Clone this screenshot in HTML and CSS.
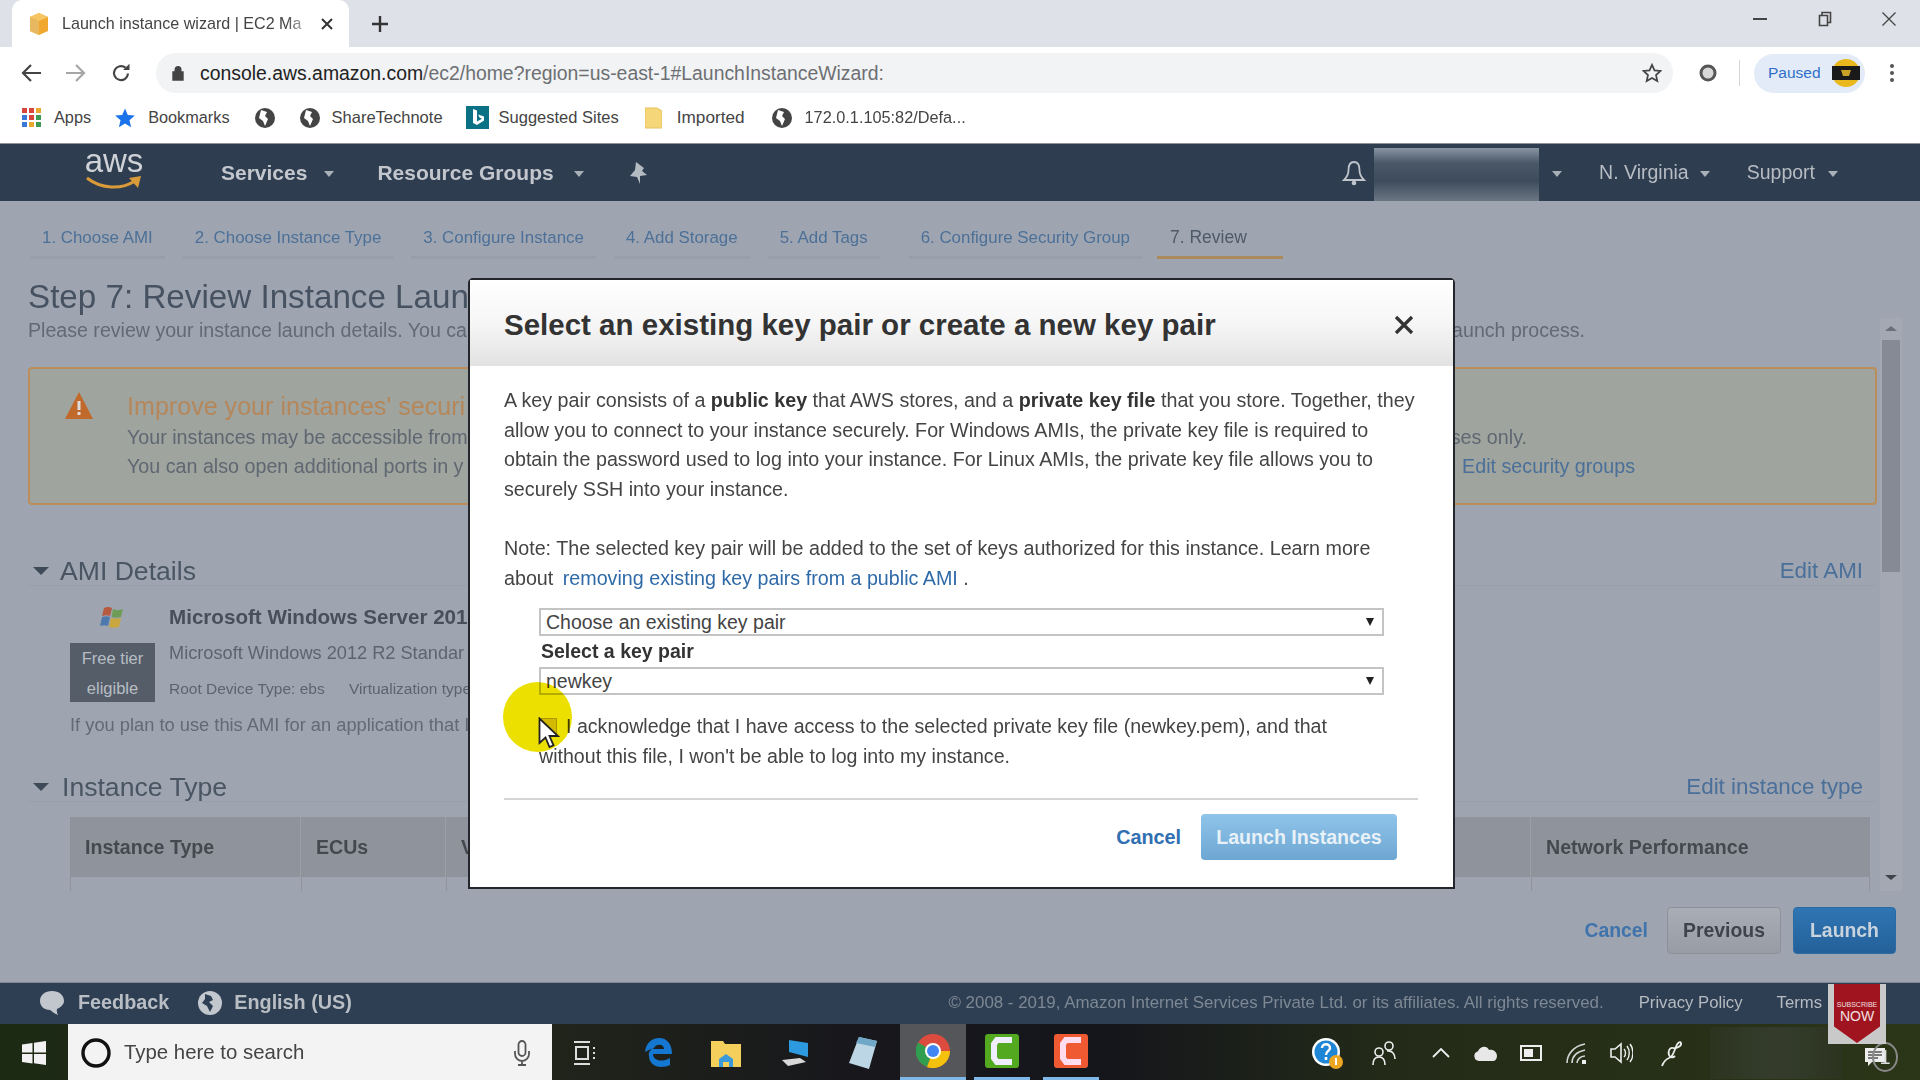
FILE: index.html
```html
<!DOCTYPE html>
<html lang="en">
<head>
<meta charset="utf-8">
<title>Launch instance wizard | EC2 Management Console</title>
<link rel="stylesheet" href="styles.css">
</head>
<body>
<div class="page">
  <div class="tabstrip">
    <div class="tab">
      <svg class="favicon" width="22" height="24" viewBox="0 0 22 24"><path d="M11 1 20 5V19L11 23 2 19V5Z" fill="#f0a92e"/><path d="M11 9V23L2 19V5Z" fill="#e8b860"/><path d="M11 1 20 5 11 9 2 5Z" fill="#f6c665"/></svg>
      <span class="tab-title">Launch instance wizard | EC2 Ma</span>
      <svg class="tab-x" width="12" height="12" viewBox="0 0 12 12"><path d="M1 1 11 11M11 1 1 11" stroke="#333" stroke-width="2"/></svg>
    </div>
    <svg class="tab-plus" width="16" height="16" viewBox="0 0 16 16"><path d="M8 0V16M0 8H16" stroke="#333" stroke-width="2.4"/></svg>
    <div class="winctrls">
      <svg width="14" height="14" viewBox="0 0 14 14"><path d="M0 7H14" stroke="#444" stroke-width="2"/></svg>
      <svg width="14" height="16" viewBox="0 0 14 16"><path d="M1.500 4.500H9.500V14.500H1.500ZM4 4V1.500H12.500V11.500H10" fill="none" stroke="#444" stroke-width="1.600"/></svg>
      <svg width="14" height="14" viewBox="0 0 14 14"><path d="M0.500 0.500 13.500 13.500M13.500 0.500 0.500 13.500" stroke="#444" stroke-width="1.300"/></svg>
    </div>
  </div>

  <div class="toolbar">
    <svg class="tb-back" width="22" height="20" viewBox="0 0 22 20"><path d="M21 10H3M11 2 3 10l8 8" fill="none" stroke="#444" stroke-width="2.200"/></svg>
    <svg class="tb-fwd" width="22" height="20" viewBox="0 0 22 20"><path d="M1 10H19M11 2l8 8-8 8" fill="none" stroke="#a6a6a6" stroke-width="2.200"/></svg>
    <svg class="tb-reload" width="20" height="20" viewBox="0 0 20 20"><path d="M17 10.500A7 7 0 1 1 14.500 4.700" fill="none" stroke="#444" stroke-width="2.200"/><path d="M12 7H18.500V0.800Z" fill="#444"/></svg>
    <div class="omnibox">
      <svg class="lock" width="12" height="16" viewBox="0 0 12 16"><path d="M1 7H11V15H1ZM3.200 7V4.500a2.800 2.800 0 0 1 5.600 0V7" fill="#444" stroke="#444" stroke-width="1.400"/></svg>
      <span class="url"><span class="url-host">console.aws.amazon.com</span>/ec2/home?region=us-east-1#LaunchInstanceWizard:</span>
      <svg class="url-star" width="20" height="20" viewBox="0 0 20 20"><path d="M10 1.800 12.500 7.400 18.500 8 14 12 15.300 18 10 14.900 4.700 18 6 12 1.500 8 7.500 7.400Z" fill="none" stroke="#444" stroke-width="1.700"/></svg>
    </div>
    <svg class="ext" width="20" height="20" viewBox="0 0 20 20"><circle cx="10" cy="10" r="7" fill="#d8d8d8" stroke="#555" stroke-width="3"/></svg>
    <span class="tb-sep"></span>
    <div class="paused">
      <span>Paused</span>
      <svg width="28" height="28" viewBox="0 0 28 28"><circle cx="14" cy="14" r="14" fill="#e8b81c"/><rect y="7" width="28" height="14" fill="#1a1a1a"/><path d="M9 11H19L17 17H11Z" fill="#c9a227"/></svg>
    </div>
    <svg class="dots" width="6" height="20" viewBox="0 0 6 20"><circle cx="3" cy="3" r="2" fill="#555"/><circle cx="3" cy="10" r="2" fill="#555"/><circle cx="3" cy="17" r="2" fill="#555"/></svg>
  </div>

  <div class="bookmarks">
    <svg class="bm-apps" width="20" height="20" viewBox="0 0 20 20">
      <rect x="0" y="0" width="5" height="5" fill="#d8453a"/><rect x="7" y="0" width="5" height="5" fill="#d8453a"/><rect x="14" y="0" width="5" height="5" fill="#e9a82e"/>
      <rect x="0" y="7" width="5" height="5" fill="#3c78d8"/><rect x="7" y="7" width="5" height="5" fill="#d8453a"/><rect x="14" y="7" width="5" height="5" fill="#3c9a55"/>
      <rect x="0" y="14" width="5" height="5" fill="#3c78d8"/><rect x="7" y="14" width="5" height="5" fill="#e9a82e"/><rect x="14" y="14" width="5" height="5" fill="#3c9a55"/>
    </svg>
    <span class="bm-text bm-t-apps">Apps</span>
    <svg class="bm-star" width="20" height="20" viewBox="0 0 20 20"><path d="M10 0.500 12.800 7 19.800 7.600 14.500 12.300 16.100 19.300 10 15.600 3.900 19.300 5.500 12.300 0.200 7.600 7.200 7Z" fill="#1a73e8"/></svg>
    <span class="bm-text bm-t-bookmarks">Bookmarks</span>
    <svg class="bm-globe g1" width="20" height="20" viewBox="0 0 20 20"><circle cx="10" cy="10" r="10" fill="#444"/><path d="M6 2 12 4 10 8 13 11 10 18 8 13 4 10Z" fill="#fff"/></svg>
    <svg class="bm-globe g2" width="20" height="20" viewBox="0 0 20 20"><circle cx="10" cy="10" r="10" fill="#444"/><path d="M6 2 12 4 10 8 13 11 10 18 8 13 4 10Z" fill="#fff"/></svg>
    <span class="bm-text bm-t-share">ShareTechnote</span>
    <svg class="bm-bing" width="23" height="23" viewBox="0 0 23 23"><rect width="23" height="23" fill="#0b7285"/><path d="M7 3 11 4.500V15.500L16 12.800 13.500 11.500 12.200 8.500 18 10.500V14.500L11 19 7 17Z" fill="#fff"/></svg>
    <span class="bm-text bm-t-sites">Suggested Sites</span>
    <svg class="bm-folder" width="17" height="22" viewBox="0 0 17 22"><path d="M0 1H12L17 4V21H0Z" fill="#f5d77a" stroke="#e6c25e"/></svg>
    <span class="bm-text bm-t-imp">Imported</span>
    <svg class="bm-globe g3" width="20" height="20" viewBox="0 0 20 20"><circle cx="10" cy="10" r="10" fill="#444"/><path d="M6 2 12 4 10 8 13 11 10 18 8 13 4 10Z" fill="#fff"/></svg>
    <span class="bm-text bm-t-ip">172.0.1.105:82/Defa...</span>
  </div>

  <header class="awsnav">
    <div class="awslogo">
      <span class="aws-word">aws</span>
      <svg width="58" height="18" viewBox="0 0 58 18"><path d="M2 4C16 15 36 16 50 7" fill="none" stroke="#d99a3a" stroke-width="3"/><path d="M44 4 56 2 53 14Z" fill="#d99a3a"/></svg>
    </div>
    <span class="nav-item nav-services">Services</span><i class="caret nc1"></i>
    <span class="nav-item nav-groups">Resource Groups</span><i class="caret nc2"></i>
    <svg class="pin" width="18" height="22" viewBox="0 0 18 22"><path d="M7 0 15 6 13 9 18 13 11 14 11 22 8 15 1 14 6 8Z" fill="#b4bac2"/></svg>
    <div class="nav-right">
      <svg class="bell" width="24" height="26" viewBox="0 0 24 26"><path d="M12 2C7.500 2 6.500 6 6.500 10 6.500 15 5 17 2 20H22C19 17 17.500 15 17.500 10 17.500 6 16.500 2 12 2Z" fill="none" stroke="#c0c5cb" stroke-width="1.800"/><circle cx="12" cy="23" r="2.300" fill="#c0c5cb"/></svg>
      <div class="redacted"></div>
      <i class="caret nc3"></i>
      <span class="nav-r nav-region">N. Virginia</span><i class="caret nc4"></i>
      <span class="nav-r nav-support">Support</span><i class="caret nc5"></i>
    </div>
  </header>

  <main class="console">
    <nav class="steps">
      <a class="step s1">1. Choose AMI</a>
      <a class="step s2">2. Choose Instance Type</a>
      <a class="step s3">3. Configure Instance</a>
      <a class="step s4">4. Add Storage</a>
      <a class="step s5">5. Add Tags</a>
      <a class="step s6">6. Configure Security Group</a>
      <a class="step s7 active">7. Review</a>
    </nav>
    <h1 class="title">Step 7: Review Instance Laun</h1>
    <div class="scrollrow">
      <div class="scroller">
        <div class="intro"><span class="clip-intro">Please review your instance launch details. You ca</span><span class="intro-end">aunch process.</span></div>
        <div class="warning">
          <svg class="warn-icon" width="28" height="27" viewBox="0 0 28 27"><path d="M14 0 28 27H0Z" fill="#c0692a"/><rect x="12.500" y="9" width="3" height="9" fill="#ddd"/><rect x="12.500" y="20" width="3" height="3" fill="#ddd"/></svg>
          <div class="warn-body">
            <div class="warn-row warn-head"><span class="clip-warn">Improve your instances' securi</span></div>
            <div class="warn-row"><span class="clip-warn">Your instances may be accessible from</span><span class="warn-end1">ses only.</span></div>
            <div class="warn-row"><span class="clip-warn">You can also open additional ports in y</span><a class="link warn-end2">Edit security groups</a></div>
          </div>
        </div>
        <div class="sec-head ami-head"><i class="tri"></i><span class="sec-title">AMI Details</span><a class="link sec-edit">Edit AMI</a></div>
        <div class="ami-row">
          <div class="ami-left">
            <svg class="winlogo" width="27" height="24" viewBox="0 0 27 24"><path d="M5 2C8 .5 11 .8 13 2L11 10C9 9 6 9 3 10Z" fill="#b5593f"/><path d="M14 3C17 4.500 20 4.500 24 3L22 11C18 12 15 12 12.500 11Z" fill="#6f9c57"/><path d="M3 11C6 10 9 10 11 11L9 20C7 19 4 19 1 20Z" fill="#4d79ad"/><path d="M12 12C15 13 18 13 22 12L20 21C16 22 13 22 10 21Z" fill="#c9a63e"/></svg>
            <div class="freetier">Free tier<br>eligible</div>
          </div>
          <div class="ami-info">
            <div class="ami-name">Microsoft Windows Server 201</div>
            <div class="ami-desc">Microsoft Windows 2012 R2 Standar</div>
            <div class="ami-meta"><span class="meta-a">Root Device Type: ebs</span><span>Virtualization type</span></div>
          </div>
        </div>
        <div class="ami-note">If you plan to use this AMI for an application that I</div>
        <div class="sec-head type-head"><i class="tri"></i><span class="sec-title">Instance Type</span><a class="link sec-edit">Edit instance type</a></div>
        <div class="table">
          <div class="tcell c1">Instance Type</div>
          <div class="tcell c2">ECUs</div>
          <div class="tcell c3"><span class="c3-clip">V</span></div>
          <div class="tcell c4">Network Performance</div>
        </div>
        <div class="trow"><span class="tb1"></span><span class="tb2"></span><span class="tb3"></span></div>
      </div>
      <div class="scrollbar">
        <i class="sb-up"></i>
        <span class="sb-thumb"></span>
        <i class="sb-down"></i>
      </div>
    </div>
    <div class="actions">
      <a class="act-cancel">Cancel</a>
      <span class="btn btn-prev">Previous</span>
      <span class="btn btn-launch">Launch</span>
    </div>

    <section class="modal">
      <div class="modal-head">
        <h2>Select an existing key pair or create a new key pair</h2>
        <svg width="20" height="20" viewBox="0 0 20 20"><path d="M2 2 18 18M18 2 2 18" stroke="#333" stroke-width="3.200"/></svg>
      </div>
      <div class="modal-body">
        <p class="m-p">A key pair consists of a <b>public key</b> that AWS stores, and a <b>private key file</b> that you store. Together, they allow you to connect to your instance securely. For Windows AMIs, the private key file is required to obtain the password used to log into your instance. For Linux AMIs, the private key file allows you to securely SSH into your instance.</p>
        <p class="m-p m-note">Note: The selected key pair will be added to the set of keys authorized for this instance. Learn more about <a class="link m-link">removing existing key pairs from a public AMI</a> .</p>
        <div class="m-form">
          <div class="select">Choose an existing key pair<i></i></div>
          <label class="m-label">Select a key pair</label>
          <div class="select">newkey<i></i></div>
          <p class="ack"><span class="check"></span>I acknowledge that I have access to the selected private key file (newkey.pem), and that without this file, I won't be able to log into my instance.</p>
        </div>
      </div>
      <div class="modal-foot">
        <a class="mf-cancel">Cancel</a>
        <span class="mf-launch">Launch Instances</span>
      </div>
      <span class="highlight"></span>
      <svg class="cursor" width="22" height="32" viewBox="0 0 22 32"><path d="M1.500 1.500V26L7.500 20.500 11.500 30 15.500 28.300 11.500 19H20Z" fill="#fff" stroke="#222" stroke-width="1.800"/></svg>
    </section>
  </main>

  <footer class="foot">
    <svg class="f-bubble" width="26" height="26" viewBox="0 0 26 26"><path d="M13 1C6 1 1 5 1 11c0 5 4 9 10 9 3 2 5 4 8 5-1-2-1.500-4-1-6 4-2 7-4.500 7-8C25 5 20 1 13 1Z" fill="#c2c7ce"/></svg>
    <span class="f-b f-feedback">Feedback</span>
    <svg class="f-globe" width="24" height="24" viewBox="0 0 24 24"><circle cx="12" cy="12" r="12" fill="#c2c7ce"/><path d="M7 3 13 5 15 9 11 11 15 15 12 21 9 15 4 12 7 8Z" fill="#2f3f53"/></svg>
    <span class="f-b f-lang">English (US)</span>
    <span class="f-copy">© 2008 - 2019, Amazon Internet Services Private Ltd. or its affiliates. All rights reserved.</span>
    <span class="f-link f-privacy">Privacy Policy</span>
    <span class="f-link f-terms">Terms</span>
  </footer>

  <div class="taskbar">
    <svg class="t-win" width="24" height="24" viewBox="0 0 24 24"><path d="M0 3.500 10.500 2V11.500H0ZM12 1.800 24 0V11.500H12ZM0 13H10.500V22.500L0 21ZM12 13H24V24L12 22.300Z" fill="#f2f2f2"/></svg>
    <div class="t-search">
      <svg width="32" height="32" viewBox="0 0 32 32"><circle cx="16" cy="16" r="13" fill="none" stroke="#111" stroke-width="3.400"/></svg>
      <span class="t-type">Type here to search</span>
      <svg class="t-mic" width="18" height="26" viewBox="0 0 18 26"><rect x="5.500" y="1" width="7" height="15" rx="3.500" fill="none" stroke="#555" stroke-width="1.800"/><path d="M2 11V14a7 7 0 0 0 14 0V11M9 21V25M5 25H13" fill="none" stroke="#555" stroke-width="1.800"/></svg>
    </div>
    <svg class="t-view" width="24" height="24" viewBox="0 0 24 24"><path d="M1 1H17M1 23H17M3 6H15V18H3ZM21 6V8M21 11V13M21 16V18" fill="none" stroke="#ddd" stroke-width="2"/></svg>
    <svg class="t-edge" width="28" height="30" viewBox="0 0 28 30"><path d="M1 14C2 5 8 0 15 0c8 0 13 6 13 16H9c0 6 8 9 17 4v7c-11 5-21 0-21-9-1-3 1-6 4-8 1-1 2-1 3-1-4 1-7 3-11 5ZM9 11H20C20 6 12 5 9 11Z" fill="#1478d2"/></svg>
    <svg class="t-folder" width="30" height="28" viewBox="0 0 30 28"><path d="M0 2H12L14 5H30V28H0Z" fill="#f5cf5b"/><path d="M8 28V20L15 15 22 20V28H18V23H12V28Z" fill="#3b9ad9"/></svg>
    <svg class="t-pc" width="32" height="30" viewBox="0 0 32 30"><path d="M9 2 28 5V19L9 14Z" fill="#2d9ae0"/><path d="M2 22 20 20 26 24 8 28Z" fill="#d8d8d8"/></svg>
    <svg class="t-note" width="30" height="32" viewBox="0 0 30 32"><path d="M10 0 28 4 20 32 0 26Z" fill="#bcd6e6"/><path d="M10 0 28 4 26 10 7 6Z" fill="#6fa8c7"/></svg>
    <div class="t-chrome">
      <svg width="34" height="34" viewBox="0 0 34 34"><circle cx="17" cy="17" r="17" fill="#dd4b3e"/><path d="M17 17 2 8.500A17 17 0 0 0 11 33Z" fill="#2f9e4f"/><path d="M17 17H34A17 17 0 0 1 11 33Z" fill="#f4c20d"/><circle cx="17" cy="17" r="8" fill="#fff"/><circle cx="17" cy="17" r="6" fill="#4285f4"/></svg>
    </div>
    <div class="t-cam green"><svg width="34" height="34" viewBox="0 0 34 34"><rect width="34" height="34" rx="3" fill="#53a91f"/><path d="M27 6H12L9 10V24L12 28H27" fill="none" stroke="#eef" stroke-width="6"/></svg></div>
    <div class="t-cam orange"><svg width="34" height="34" viewBox="0 0 34 34"><rect width="34" height="34" rx="3" fill="#ef5a32"/><path d="M27 6H12L9 10V24L12 28H27" fill="none" stroke="#fde" stroke-width="6"/></svg></div>
    <div class="tray">
      <svg class="tr-help" width="32" height="34" viewBox="0 0 32 34"><circle cx="15" cy="16" r="14" fill="#fff"/><circle cx="15" cy="16" r="11.500" fill="#1f86d6"/><path d="M11 12c0-5 8-5 8 0 0 3-4 3-4 7" fill="none" stroke="#fff" stroke-width="2.400"/><rect x="13.700" y="21" width="2.600" height="3" fill="#fff"/><circle cx="25" cy="26" r="7" fill="#eda621"/><rect x="24" y="22" width="2" height="7" fill="#fff"/></svg>
      <svg class="tr-people" width="24" height="26" viewBox="0 0 24 26"><circle cx="7" cy="12" r="4" fill="none" stroke="#eee" stroke-width="1.600"/><path d="M1 25C1 20 3 17 7 17s6 3 6 8" fill="none" stroke="#eee" stroke-width="1.600"/><circle cx="17" cy="6" r="4" fill="none" stroke="#eee" stroke-width="1.600"/><path d="M15 11c5-1 8 3 8 8" fill="none" stroke="#eee" stroke-width="1.600"/></svg>
      <svg class="tr-chev" width="18" height="10" viewBox="0 0 18 10"><path d="M1 9 9 1 17 9" fill="none" stroke="#eee" stroke-width="1.800"/></svg>
      <svg class="tr-cloud" width="24" height="16" viewBox="0 0 24 16"><path d="M5 16a5 5 0 0 1-1-9.800C6 1 13 0 15 5c4-1 8 2 8 6 0 3-2 5-4 5Z" fill="#e8e8e8"/></svg>
      <svg class="tr-batt" width="22" height="16" viewBox="0 0 22 16"><rect x="1" y="1" width="20" height="14" fill="none" stroke="#eee" stroke-width="2"/><rect x="4" y="4" width="9" height="8" fill="#eee"/></svg>
      <svg class="tr-wifi" width="22" height="24" viewBox="0 0 22 24"><path d="M1 22C1 13 8 5 19 3M6 22C6 16 10 11 19 9M11 22C11 19 14 15 19 15" fill="none" stroke="#d6d6d6" stroke-width="1.600"/><rect x="16" y="19" width="4" height="4" fill="#eee"/></svg>
      <svg class="tr-sound" width="24" height="24" viewBox="0 0 24 24"><path d="M2 8H6L12 3V21L6 16H2Z" fill="none" stroke="#eee" stroke-width="1.600"/><path d="M15 8c2 2 2 6 0 8M18 5c3 4 3 10 0 14M21 3c4 5 4 13 0 18" fill="none" stroke="#eee" stroke-width="1.400"/></svg>
      <svg class="tr-pen" width="22" height="28" viewBox="0 0 22 28"><path d="M1 27C3 22 5 20 8 19 12 18 13 12 15 8 16 4 19 2 20 4 21 7 15 10 12 9 8 8 7 13 8 16c1 3 4 3 6 1" fill="none" stroke="#eee" stroke-width="1.800"/></svg>
      <span class="tr-clock"></span>
      <svg class="tr-notif" width="22" height="20" viewBox="0 0 22 20"><path d="M1 1H21V15H8L4 19V15H1Z" fill="#eee"/><path d="M4 5H18M4 8H18M4 11H14" stroke="#555" stroke-width="1.400"/></svg>
      <span class="tr-badge">1</span>
    </div>
  </div>

  <div class="subscribe">
    <div class="ribbon"><span class="sub-a">SUBSCRIBE</span><span class="sub-b">NOW</span></div>
  </div>
</div>
</body>
</html>
```

FILE: styles.css
```css
* { box-sizing: border-box; }
html, body { margin: 0; padding: 0; height: 100%; overflow: hidden; background: #fff; }
body { font-family: "Liberation Sans", Arial, sans-serif; }
p, h1, h2 { margin: 0; }
svg { flex: none; display: block; }
a { text-decoration: none; }

.page { position: relative; width: 1920px; height: 1080px; display: flex; flex-direction: column; overflow: hidden; filter: blur(0.5px); }

/* browser chrome */
.tabstrip { height: 47px; background: #dee1e7; display: flex; align-items: center; padding-left: 12px; flex: none; }
.tab { width: 337px; height: 47px; background: #fff; border-radius: 10px 10px 0 0; display: flex; align-items: center; padding-left: 16px; }
.tab-title { margin-left: 12px; width: 255px; font-size: 16.100px; color: #444; white-space: nowrap; overflow: hidden; -webkit-mask-image: linear-gradient(90deg, #000 88%, transparent); mask-image: linear-gradient(90deg, #000 88%, transparent); }
.tab-x { margin-left: 4px; }
.tab-plus { margin-left: 23px; }
.winctrls { margin-left: auto; width: 167px; height: 47px; padding: 0 24px 9px 0; display: flex; align-items: center; justify-content: space-between; }

.toolbar { height: 47px; background: #fff; display: flex; align-items: center; flex: none; padding-top: 5px; }
.tb-back { margin-left: 20px; }
.tb-fwd { margin-left: 23px; }
.tb-reload { margin-left: 24px; }
.omnibox { margin-left: 25px; width: 1517px; height: 40px; border-radius: 20px; background: #f1f3f4; display: flex; align-items: center; padding-left: 16px; }
.url { margin-left: 16px; font-size: 19.400px; color: #6d6f73; white-space: nowrap; }
.url-host { color: #222; }
.url-star { margin-left: auto; margin-right: 11px; }
.ext { margin-left: 25px; }
.tb-sep { width: 1px; height: 26px; background: #d6d6d6; margin-left: 21px; }
.paused { margin-left: 14px; width: 111px; height: 39px; border-radius: 20px; background: #e3ebf8; display: flex; align-items: center; justify-content: space-between; padding: 0 5px 0 14px; font-size: 15.500px; color: #2f6fc9; }
.dots { margin-left: 24px; }

.bookmarks { height: 50px; background: #fff; display: flex; align-items: center; flex: none; border-bottom: 1px solid #8f939a; padding-bottom: 2px; }
.bm-text { font-size: 16.300px; color: #444; white-space: nowrap; }
.bm-apps { margin-left: 22px; }
.bm-t-apps { margin-left: 12px; }
.bm-star { margin-left: 24px; }
.bm-t-bookmarks { margin-left: 13px; }
.g1 { margin-left: 25px; }
.g2 { margin-left: 25px; }
.bm-t-share { margin-left: 12px; font-size: 16.500px; }
.bm-bing { margin-left: 23px; }
.bm-t-sites { margin-left: 10px; font-size: 16.500px; }
.bm-folder { margin-left: 26px; }
.bm-t-imp { margin-left: 15px; font-size: 17.200px; }
.g3 { margin-left: 27px; }
.bm-t-ip { margin-left: 13px; }

/* aws nav */
.awsnav { height: 57px; background: #2e3d50; display: flex; align-items: center; flex: none; color: #c3c7cd; position: relative; }
.awslogo { margin-left: 85px; width: 58px; height: 50px; display: flex; flex-direction: column; align-items: center; margin-top: -6px; }
.aws-word { font-size: 33px; line-height: 32px; color: #cfd2d6; }
.awslogo svg { margin-top: -3px; }
.nav-item { font-size: 21px; font-weight: 700; color: #c3c7cd; white-space: nowrap; }
.nav-services { margin-left: 78px; }
.nav-groups { margin-left: 43px; }
.caret { display: block; flex: none; width: 0; height: 0; border-left: 5px solid transparent; border-right: 5px solid transparent; border-top: 6px solid #aab0b8; margin-top: 3px; }
.nc1 { margin-left: 17px; }
.nc2 { margin-left: 20px; }
.pin { margin-left: 45px; }
.nav-right { margin-left: auto; display: flex; align-items: center; height: 57px; }
.redacted { width: 165px; height: 53px; margin-top: 4px; margin-left: 8px; background: linear-gradient(180deg, #8a95a2 0%, #4a5868 28%, #3d4b5c 62%, #6b7683 100%); }
.nc3 { margin-left: 13px; }
.nav-r { font-size: 19.500px; color: #b7bcc3; white-space: nowrap; }
.nav-region { margin-left: 37px; }
.nc4 { margin-left: 11px; }
.nav-support { margin-left: 37px; }
.nc5 { margin-left: 13px; margin-right: 82px; }

/* console */
.console { position: relative; height: 781px; flex: none; background: #9fa5b0; display: flex; flex-direction: column; overflow: hidden; }
.steps { height: 58px; display: flex; padding-left: 30px; gap: 18px; flex: none; }
.step { height: 58px; padding: 27px 12px 0; font-size: 16.900px; line-height: 19px; color: #4c7098; white-space: nowrap; border-bottom: 3px solid #989eaa; }
.s6 { margin-left: 11px; }
.step.active { width: 126px; margin-left: -3px; color: #4f5a68; border-bottom-color: #ab8a5d; padding: 27px 13px 0; font-size: 17.500px; }
.title { margin: 20px 0 0 28px; width: 440px; overflow: hidden; height: 39px; font-weight: 400; font-size: 33.200px; line-height: 36px; color: #465261; white-space: nowrap; flex: none; }
.scrollrow { height: 573px; display: flex; flex: none; margin-left: 28px; gap: 3px; }
.scroller { width: 1849px; overflow: hidden; flex: none; }
.intro { height: 24px; line-height: 24px; font-size: 19.600px; color: #626a75; white-space: nowrap; display: flex; justify-content: space-between; padding-right: 292px; }
.clip-intro { width: 440px; overflow: hidden; }
.warning { margin-top: 25px; height: 138px; background: #9fa49f; border: 2px solid #bb8d5a; border-radius: 4px; display: flex; padding: 23px 0 0 35px; overflow: hidden; }
.warn-body { margin-left: 34px; flex: 1; white-space: nowrap; }
.warn-row { display: flex; justify-content: space-between; font-size: 19.700px; line-height: 29px; color: #5f6771; }
.warn-head { font-size: 25.100px; line-height: 30px; color: #b5875a; height: 32px; margin-top: -1px; }
.clip-warn { width: 341px; overflow: hidden; }
.warn-end1 { margin-right: 348px; }
.warn-end2 { margin-right: 240px; }
.link { color: #4a6f99; }
.sec-head { height: 34px; display: flex; align-items: center; border-bottom: 1px solid #9aa0ab; padding: 5px 14px 0 0; }
.ami-head { margin-top: 47px; }
.tri { width: 0; height: 0; border-left: 8px solid transparent; border-right: 8px solid transparent; border-top: 8px solid #3f4a58; margin-left: 5px; }
.sec-title { font-size: 26.600px; color: #4a5563; margin-left: 11px; }
.sec-edit { margin-left: auto; font-size: 22.400px; }
.ami-row { display: flex; margin-left: 42px; gap: 14px; }
.ami-left { width: 85px; display: flex; flex-direction: column; align-items: center; padding-top: 20px; flex: none; }
.freetier { margin-top: 13px; width: 85px; height: 59px; background: #555d69; color: #b8bdc4; font-size: 16.500px; line-height: 30px; text-align: center; }
.ami-info { width: 300px; overflow: hidden; white-space: nowrap; }
.ami-name { margin-top: 18px; height: 26px; line-height: 26px; font-size: 20.600px; font-weight: 700; color: #474f5a; }
.ami-desc { margin-top: 10px; height: 26px; line-height: 26px; font-size: 18.200px; color: #5c6470; }
.ami-meta { margin-top: 10px; height: 26px; line-height: 26px; font-size: 15.500px; color: #5c6470; }
.meta-a { display: inline-block; width: 180px; }
.ami-note { margin: 11px 0 0 42px; width: 398px; overflow: hidden; height: 24px; line-height: 24px; font-size: 18.300px; color: #626a75; white-space: nowrap; }
.type-head { margin-top: 31px; }
.type-head .sec-title { margin-left: 13px; }
.table { margin: 15px 0 0 42px; width: 1800px; height: 60px; background: #8f949c; display: flex; font-size: 19.600px; font-weight: 700; color: #43494f; line-height: 60px; }
.tcell { padding-left: 15px; border-right: 1px solid #9ba0a8; white-space: nowrap; overflow: hidden; }
.c1 { width: 231px; }
.c2 { width: 145px; }
.c3 { width: 1085px; }
.c3-clip { display: inline-block; width: 7px; overflow: hidden; }
.c4 { border: 0; }
.trow { margin-left: 42px; width: 1800px; height: 14px; display: flex; border-left: 1px solid #8f949c; border-right: 1px solid #8f949c; }
.tb1 { width: 231px; border-right: 1px solid #8f949c; }
.tb2 { width: 145px; border-right: 1px solid #8f949c; }
.tb3 { width: 1085px; border-right: 1px solid #8f949c; }
.scrollbar { width: 22px; background: #a3a8b2; display: flex; flex-direction: column; align-items: center; flex: none; padding-top: 8px; }
.sb-up { border-left: 6px solid transparent; border-right: 6px solid transparent; border-bottom: 5px solid #6a6f78; }
.sb-thumb { width: 18px; height: 232px; margin-top: 9px; background: #858a95; }
.sb-down { margin-top: auto; margin-bottom: 11px; border-left: 6px solid transparent; border-right: 6px solid transparent; border-top: 5px solid #3f444c; }
.actions { flex: 1; display: flex; align-items: center; padding: 0 24px 0 0; justify-content: flex-end; font-size: 19.400px; font-weight: 700; margin-top: 15px; margin-bottom: 28px; }
.act-cancel { color: #3f73ac; margin-right: 19px; }
.btn { height: 47px; line-height: 45px; text-align: center; border-radius: 4px; }
.btn-prev { width: 114px; color: #3e444c; background: linear-gradient(180deg, #a9adb5, #979ca5); border: 1px solid #8c9099; margin-right: 12px; }
.btn-launch { width: 103px; color: #c8d3de; background: linear-gradient(180deg, #2f76b4, #246099); border: 1px solid #2a6aa5; }

/* modal */
.modal { position: absolute; left: 468px; top: 77px; width: 987px; height: 611px; background: #fff; border: 2px solid #23262b; border-radius: 5px 5px 0 0; display: flex; flex-direction: column; }
.modal-head { height: 86px; flex: none; background: linear-gradient(180deg, #fff 0%, #f6f6f6 50%, #e2e2e2 100%); display: flex; align-items: center; justify-content: space-between; padding: 4px 39px 0 34px; }
.modal-head h2 { font-size: 29.500px; font-weight: 700; color: #333; white-space: nowrap; }
.modal-body { padding: 20px 34px 0; flex: none; }
.m-p { font-size: 19.700px; line-height: 29.500px; color: #444; }
.m-p b { color: #333; }
.m-note { margin-top: 30px; }
.m-link { color: #2f6aa8; margin-left: 4px; }
.m-form { margin: 15px 24px 0 35px; }
.select { position: relative; width: 845px; height: 28px; border: 2px solid #c4c4c4; background: #fff; font-size: 19.500px; line-height: 24px; padding-left: 5px; color: #444; }
.select i { position: absolute; right: 8px; top: 8px; border-left: 4px solid transparent; border-right: 4px solid transparent; border-top: 8px solid #222; }
.m-label { display: block; font-size: 19.500px; font-weight: 700; line-height: 31px; height: 31px; padding-left: 2px; color: #333; }
.ack { margin-top: 16px; font-size: 19.600px; line-height: 30px; color: #444; width: 830px; }
.check { display: inline-block; width: 17px; height: 17px; border: 1px solid #b9ad1c; background: #e4d400; margin: 0 9px 0 1px; vertical-align: -2px; }
.modal-foot { position: absolute; left: 34px; bottom: 27px; height: 62px; border-top: 2px solid #d4d4d4; display: flex; align-items: flex-end; justify-content: flex-end; width: 914px; padding-right: 21px; }
.mf-cancel { font-size: 19.800px; font-weight: 700; color: #2f6fb2; margin-right: 20px; line-height: 45px; }
.mf-launch { width: 196px; height: 46px; border-radius: 4px; background: linear-gradient(180deg, #90c4ea, #6da7d2); font-size: 19.600px; font-weight: 700; color: #e8f1f7; text-align: center; line-height: 46px; }
.highlight { position: absolute; left: 33px; top: 402px; width: 69px; height: 70px; border-radius: 50%; background: #ece000; z-index: 1; mix-blend-mode: multiply; }
.cursor { position: absolute; left: 68px; top: 437px; z-index: 2; }

/* footer */
.foot { height: 42px; background: #2f3f53; display: flex; align-items: center; flex: none; border-top: 1px solid #808690; padding-bottom: 2px; }
.f-bubble { margin-left: 39px; }
.f-b { font-size: 19.800px; font-weight: 700; color: #b9bec5; white-space: nowrap; }
.f-feedback { margin-left: 13px; }
.f-globe { margin-left: 29px; }
.f-lang { margin-left: 12px; }
.f-copy { margin-left: auto; font-size: 16.900px; color: #7e8894; white-space: nowrap; }
.f-link { font-size: 16.700px; color: #b6bbc2; white-space: nowrap; }
.f-privacy { margin-left: 35px; }
.f-terms { margin-left: 34px; margin-right: 98px; }

/* taskbar */
.taskbar { height: 57px; flex: none; display: flex; align-items: center; background: linear-gradient(90deg, #1c2a14 0%, #23271a 25%, #17171c 45%, #15161b 58%, #232a18 72%, #2b3517 100%); }
.t-win { margin-left: 22px; }
.t-search { margin-left: 22px; width: 484px; height: 57px; background: #f3f3f3; display: flex; align-items: center; padding-left: 12px; }
.t-type { margin-left: 12px; font-size: 20.400px; color: #444; white-space: nowrap; }
.t-mic { margin-left: auto; margin-right: 21px; }
.t-view { margin-left: 21px; }
.t-edge { margin-left: 47px; }
.t-folder { margin-left: 39px; }
.t-pc { margin-left: 39px; }
.t-note { margin-left: 37px; }
.t-chrome { margin-left: 21px; width: 66px; height: 57px; background: #54565a; border-bottom: 4px solid #7fb8e6; display: flex; align-items: center; justify-content: center; }
.t-cam { width: 56px; height: 57px; display: flex; justify-content: center; align-items: center; border-bottom: 4px solid #7fb8e6; }
.t-cam.green { margin-left: 8px; }
.t-cam.orange { margin-left: 13px; }
.tray { flex: 1; display: flex; align-items: center; height: 57px; position: relative; }
.tr-help { margin-left: 212px; }
.tr-people { margin-left: 29px; }
.tr-chev { margin-left: 36px; }
.tr-cloud { margin-left: 24px; }
.tr-batt { margin-left: 22px; }
.tr-wifi { margin-left: 24px; }
.tr-sound { margin-left: 21px; }
.tr-pen { margin-left: 28px; }
.tr-clock { width: 132px; height: 52px; margin-left: 27px; background: linear-gradient(90deg, #2c3420, #353c2c 50%, #2c3420); }
.tr-notif { position: absolute; right: 34px; top: 23px; }
.tr-badge { position: absolute; right: 22px; top: 18px; width: 26px; height: 30px; border: 2px solid #888; border-radius: 50%; color: #ddd; font-size: 20px; line-height: 26px; text-align: center; }

/* subscribe overlay */
.subscribe { position: absolute; left: 1828px; top: 984px; width: 58px; height: 60px; background: #c9c9c9; }
.ribbon { width: 46px; height: 59px; margin: 0 auto; background: #a0141f; clip-path: polygon(0 0, 100% 0, 100% 72%, 50% 100%, 0 72%); display: flex; flex-direction: column; align-items: center; color: #f0e0e0; padding-top: 16px; }
.sub-a { font-size: 7px; line-height: 9px; white-space: nowrap; }
.sub-b { font-size: 14px; line-height: 15px; }
```
